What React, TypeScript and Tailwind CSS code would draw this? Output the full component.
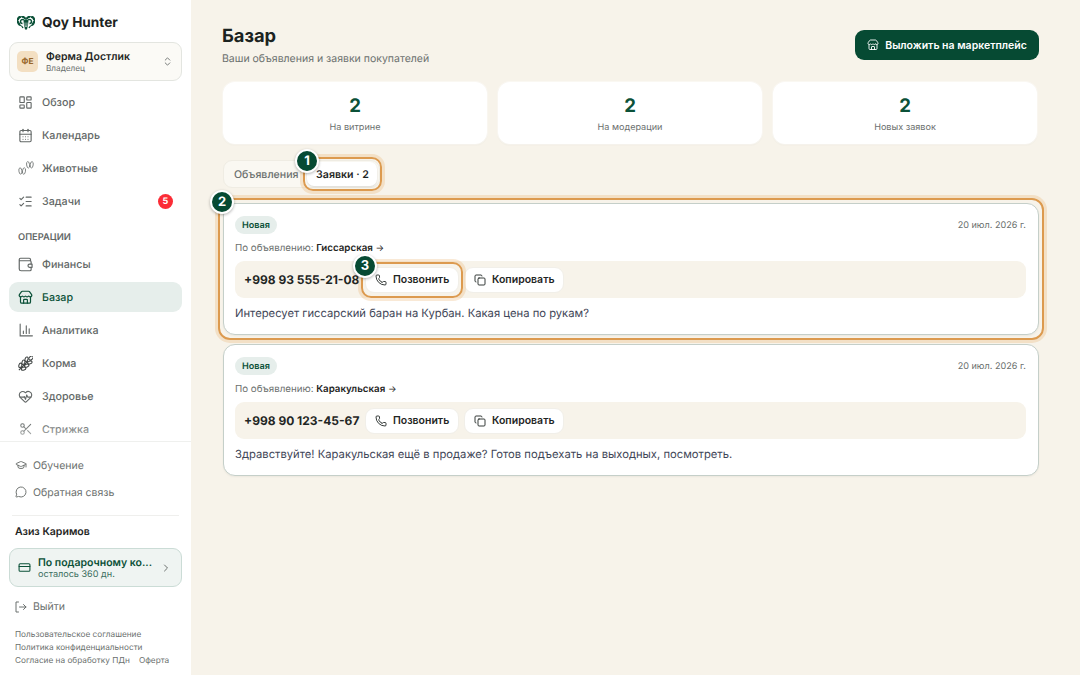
import type { ReactNode } from 'react';
import clsx from 'clsx';
import {
  CalendarDays,
  ChevronRight,
  ChevronsUpDown,
  Copy,
  CreditCard,
  GraduationCap,
  HeartPulse,
  LayoutDashboard,
  ListChecks,
  MessageCircle,
  Phone,
  Scissors,
  Store,
} from 'lucide-react';

function RamLogo() {
  return (
    <svg width="18" height="14" viewBox="0 0 36 28" fill="none" stroke="#0b5138" aria-hidden="true">
      <path d="M17 6C14 1 8 0 4 3c-4 4-3 11 2 15" strokeWidth="4.500" />
      <path d="M19 6c3-5 9-6 13-3 4 4 3 11-2 15" strokeWidth="4.500" />
      <path d="M14 8c-3-2-7-1-7 3 0 2 1 4 4 4" strokeWidth="3" />
      <path d="M22 8c3-2 7-1 7 3 0 2-1 4-4 4" strokeWidth="3" />
      <path d="M5 18c3 1 6 2 7 6M31 18c-3 1-6 2-7 6" strokeWidth="2.500" />
      <path d="M13 9l5-3 5 3-1 9-2 9h-4l-2-9z" fill="#0b5138" stroke="none" />
      <path d="M16 13v5l1 4M20 13v5l-1 4M8 1l2 4M28 1l-2 4M2 9l4 1M34 9l-4 1" stroke="#fff" strokeWidth="1.300" />
    </svg>
  );
}

function HoofIcon() {
  return (
    <svg width="16" height="16" viewBox="0 0 16 16" fill="none" stroke="currentColor" strokeWidth="0.75" className="shrink-0" aria-hidden="true">
      <ellipse cx="2.400" cy="11" rx="1.500" ry="3.200" transform="rotate(-8 2.400 11)" />
      <ellipse cx="6" cy="11" rx="1.500" ry="3.200" transform="rotate(8 6 11)" />
      <ellipse cx="10.100" cy="4.800" rx="1.500" ry="3.200" transform="rotate(-8 10.100 4.800)" />
      <ellipse cx="13.700" cy="4.800" rx="1.500" ry="3.200" transform="rotate(8 13.700 4.800)" />
    </svg>
  );
}

function WalletIcon() {
  return (
    <svg width="15" height="15" viewBox="0 0 24 24" fill="none" stroke="currentColor" strokeWidth="1.9" strokeLinecap="round" strokeLinejoin="round" aria-hidden="true">
      <path d="M20 6V4a2 2 0 0 0-2-2H4a2 2 0 0 0-2 2v15a3 3 0 0 0 3 3h14a2 2 0 0 0 2-2V8a2 2 0 0 0-2-2H2" />
      <path d="M22.500 11.500h-4a2.500 2.500 0 0 0 0 5h4z" fill="#fff" />
    </svg>
  );
}

function BarsIcon() {
  return (
    <svg width="14" height="14" viewBox="0 0 24 24" fill="none" stroke="currentColor" strokeWidth="1.900" strokeLinecap="round" aria-hidden="true">
      <path d="M2 2v20h21M7.500 18v-4M12.500 18V5M17.500 18v-8" />
    </svg>
  );
}

// ear of wheat: grains in pairs along a diagonal stem
function WheatIcon() {
  return (
    <svg width="15" height="15" viewBox="0 0 24 24" fill="none" stroke="#3f4443" strokeWidth="1.700" aria-hidden="true">
      <g transform="rotate(45 12 12)">
        <path d="M12 27V6" />
        <ellipse cx="12" cy="-.5" rx="2.600" ry="4" />
        <ellipse cx="8.300" cy="6" rx="2.300" ry="3.700" transform="rotate(-25 8.300 6)" />
        <ellipse cx="15.700" cy="6" rx="2.300" ry="3.700" transform="rotate(25 15.700 6)" />
        <ellipse cx="8.300" cy="13" rx="2.300" ry="3.700" transform="rotate(-25 8.300 13)" />
        <ellipse cx="15.700" cy="13" rx="2.300" ry="3.700" transform="rotate(25 15.700 13)" />
        <ellipse cx="8.300" cy="20" rx="2.300" ry="3.700" transform="rotate(-25 8.300 20)" />
        <ellipse cx="15.700" cy="20" rx="2.300" ry="3.700" transform="rotate(25 15.700 20)" />
      </g>
    </svg>
  );
}

function ExitIcon() {
  return (
    <svg width="12" height="12" viewBox="0 0 24 24" fill="none" stroke="currentColor" strokeWidth="2" strokeLinecap="round" strokeLinejoin="round" aria-hidden="true">
      <path d="M7 2H2v20h5M9 12h13M17 7l5 5-5 5" />
    </svg>
  );
}

interface NavItemProps {
  icon: ReactNode;
  label: string;
  active?: boolean;
  badge?: number;
}

function NavItem({ icon, label, active, badge }: NavItemProps) {
  return (
    <a
      className={clsx(
        'flex h-[30px] shrink-0 items-center rounded-[9px] pr-[9px] pl-[9px] text-[10.700px] font-medium',
        active ? 'bg-[#e6eeeb] text-[#0b5138]' : 'text-[#626766]',
      )}
    >
      <span className="flex w-[15px] justify-center">{icon}</span>
      <span className="ml-[9px] pt-[2px] leading-[16px]">{label}</span>
      {badge && (
        <span className="ml-auto flex size-[15px] items-center justify-center rounded-full bg-[#fb2c36] pt-px text-[9px] font-bold text-white">
          {badge}
        </span>
      )}
    </a>
  );
}

function Sidebar() {
  return (
    <aside className="flex h-full w-[191px] shrink-0 flex-col bg-white">
      <div className="flex h-[42px] items-center gap-[7px] pt-[3px] pl-[17px]">
        <RamLogo />
        <span className="pt-px text-[13.650px] font-bold text-[#1c2321]">Qoy Hunter</span>
      </div>
      <div className="mr-[9px] ml-[9px] flex h-[39px] shrink-0 items-center rounded-[9px] border border-[#e3e5e0] bg-[#fbfaf6] pr-[8px] pl-[7px]">
        <span className="flex size-[21px] items-center justify-center rounded-[5px] bg-[#f3dfc2] pt-px text-[8.300px] font-bold text-[#98662a]">ФЕ</span>
        <span className="ml-[8px] flex flex-col pt-px">
          <span className="text-[10.500px] leading-[13px] font-semibold text-[#1f2624]">Ферма Достлик</span>
          <span className="text-[8.200px] leading-[11px] text-[#6b706e]">Владелец</span>
        </span>
        <ChevronsUpDown size={11} className="ml-auto text-[#6b706e]" />
      </div>

      <nav className="relative flex h-[361px] shrink-0 flex-col gap-[3px] overflow-hidden border-b border-[#eff0ee] px-[9px] pt-[6px]">
        <NavItem icon={<LayoutDashboard size={15} strokeWidth={1.8} />} label="Обзор" />
        <NavItem icon={<CalendarDays size={15} strokeWidth={1.8} />} label="Календарь" />
        <NavItem icon={<HoofIcon />} label="Животные" />
        <NavItem icon={<ListChecks size={15} strokeWidth={1.8} />} label="Задачи" badge={5} />
        <h2 className="flex h-[27px] shrink-0 items-end pb-px pl-[9px] text-[9.300px] leading-[14px] font-semibold text-[#626766]">ОПЕРАЦИИ</h2>
        <NavItem icon={<WalletIcon />} label="Финансы" />
        <NavItem icon={<Store size={15} strokeWidth={1.9} />} label="Базар" active />
        <NavItem icon={<BarsIcon />} label="Аналитика" />
        <NavItem icon={<WheatIcon />} label="Корма" />
        <NavItem icon={<HeartPulse size={15} strokeWidth={1.8} />} label="Здоровье" />
        <NavItem icon={<Scissors size={14} strokeWidth={1.8} />} label="Стрижка" />
        <div className="absolute inset-x-0 bottom-0 h-[20px] bg-linear-to-t from-white/60 to-white/0" />
      </nav>

      <div className="flex flex-col px-[15px] pt-[9px] text-[10.500px] text-[#6b706e]">
        <a className="flex h-[27px] items-center gap-[6px] pt-px">
          <GraduationCap size={12} strokeWidth={1.9} />
          <span className="pt-px">Обучение</span>
        </a>
        <a className="flex h-[27px] items-center gap-[6px] pt-px">
          <MessageCircle size={12} strokeWidth={1.9} />
          <span className="pt-px">Обратная связь</span>
        </a>
      </div>
      <div className="mx-[12px] mt-[10px] border-t border-[#efefed]" />
      <p className="mt-[8px] pl-[15px] text-[10.550px] leading-[16px] font-semibold text-[#1f2624]">Азиз Каримов</p>
      <a className="mx-[9px] mt-[8px] flex h-[39px] shrink-0 items-center rounded-[9px] border border-[#cbdcd6] bg-[#eff4f2] pr-[9px] pl-[8px]">
        <CreditCard size={13} strokeWidth={2} className="shrink-0 text-[#0b5138]" />
        <span className="ml-[7px] flex flex-col">
          <span className="text-[10.500px] leading-[13px] font-semibold whitespace-nowrap text-[#0b5138]">По подарочному ко...</span>
          <span className="text-[9.100px] leading-[11px] text-[#3c6f5f]">осталось 360 дн.</span>
        </span>
        <ChevronRight size={12} className="ml-auto shrink-0 text-[#6b706e]" />
      </a>
      <a className="mt-[6px] flex h-[27px] items-center gap-[6px] pl-[15px] text-[10.500px] text-[#6b706e]">
        <ExitIcon />
        <span className="pt-px">Выйти</span>
      </a>
      <div className="mt-[8px] flex flex-wrap gap-x-[9px] pl-[15px] text-[8.240px] leading-[13px] text-[#6b706e]">
        <a className="w-full">Пользовательское соглашение</a>
        <a className="w-full">Политика конфиденциальности</a>
        <a>Согласие на обработку ПДн</a>
        <a>Оферта</a>
      </div>
    </aside>
  );
}

function Stat({ value, label }: { value: number; label: string }) {
  return (
    <div className="flex h-[62px] flex-1 flex-col items-center rounded-[12px] bg-white pt-[12px] shadow-[0_0_0_1px_rgba(255,255,255,0.4),0_1px_2px_rgba(60,50,20,0.06)]">
      <span className="text-[18.600px] leading-[25px] font-bold text-[#0b5138]">{value}</span>
      <span className="mt-[2px] text-[9.100px] leading-[14px] text-[#6b706e]">{label}</span>
    </div>
  );
}

// numbered tour marker, centred on the top-left corner of its ring
function Marker({ n }: { n: number }) {
  return (
    <span className="absolute -top-[10px] -left-[10px] flex size-[24px] items-center justify-center rounded-full border-2 border-white bg-[#064a33] pt-px text-[13px] font-bold text-white shadow-[0_1px_3px_rgba(0,0,0,0.3)]">
      {n}
    </span>
  );
}

const RING = 'pointer-events-none absolute z-10 border-2 border-[#dc9a4f] shadow-[0_0_0_3px_rgba(232,168,92,0.25)]';

interface LeadProps {
  listing: string;
  phone: string;
  message: string;
  highlighted?: boolean;
}

function Lead({ listing, phone, message, highlighted }: LeadProps) {
  return (
    <article className="relative flex h-[132px] flex-col rounded-[12px] border border-[#c5cfc9] bg-white pr-[12px] pl-[11px] pt-[12px] shadow-[0_1px_2px_rgba(0,0,0,0.05)]">
      {highlighted && (
        <div className={clsx(RING, '-inset-x-[6px] -top-[6px] -bottom-[6px] rounded-[12px]')}>
          <Marker n={2} />
        </div>
      )}
      <div className="flex h-[18px] items-center justify-between">
        <span className="flex h-[18px] items-center rounded-full bg-[#e6eeeb] px-[7px] pt-px text-[9.100px] font-semibold text-[#0b5138]">Новая</span>
        <span className="pt-px text-[9.100px] text-[#6b706e]">20 июл. 2026 г.</span>
      </div>
      <p className="mt-[6px] h-[16px] text-[9.750px] leading-[17px] text-[#6b706e]">
        По объявлению: <span className="font-semibold text-[#1f2624]">{listing}</span>{' '}
        <span className="text-[9px] text-[#1f2624]">→</span>
      </p>
      <div className="mt-[5px] flex h-[37px] shrink-0 items-center rounded-[9px] bg-[#f7f3ea] pl-[9px]">
        <span className="w-[121px] pt-px text-[12px] font-bold whitespace-nowrap text-[#1f2624]">{phone}</span>
        <button className="relative flex h-[26px] w-[94px] items-center rounded-[9px] border border-[#f1efe9] bg-white pl-[9px] text-[10.500px] font-semibold text-[#1f2624]">
          <Phone size={12} strokeWidth={1.8} className="mr-[6px]" />
          <span className="pt-px">Позвонить</span>
          {highlighted && (
            <span className={clsx(RING, '-inset-x-[5px] -inset-y-[6px] rounded-[10px]')}>
              <Marker n={3} />
            </span>
          )}
        </button>
        <button className="ml-[5px] flex h-[26px] w-[100px] items-center rounded-[9px] border border-[#f1efe9] bg-white pl-[9px] text-[10.500px] font-semibold text-[#1f2624]">
          <Copy size={12} strokeWidth={1.8} className="mr-[6px]" />
          <span className="pt-px">Копировать</span>
        </button>
      </div>
      <p className="mt-[6px] text-[11.240px] leading-[19px] text-[#3f4657]">{message}</p>
    </article>
  );
}

export default function App() {
  return (
    <div className="flex h-[675px] w-[1080px] overflow-hidden bg-[#f7f3ea] font-['Inter',sans-serif] [text-rendering:geometricPrecision]">
      <Sidebar />
      <main className="flex w-[848px] flex-col pt-[24px] pl-[31px]">
        <header className="flex h-[58px] items-start justify-between">
          <div>
            <h1 className="text-[18.300px] leading-[24px] font-bold text-[#1c2321]">Базар</h1>
            <p className="mt-[2px] text-[10.500px] leading-[18px] text-[#6b706e]">Ваши объявления и заявки покупателей</p>
          </div>
          <button className="mt-[6px] flex h-[30px] w-[184px] items-center justify-center gap-[6px] rounded-[9px] bg-[#064a33] text-[10.500px] font-semibold whitespace-nowrap text-white">
            <Store size={12} strokeWidth={1.8} />
            <span className="pt-px">Выложить на маркетплейс</span>
          </button>
        </header>

        <section className="flex gap-[11px] pr-[2px] pl-[1px]">
          <Stat value={2} label="На витрине" />
          <Stat value={2} label="На модерации" />
          <Stat value={2} label="Новых заявок" />
        </section>

        <div className="mt-[16px] ml-[1px] flex h-[28px] w-[157px] items-center rounded-[9px] border border-[#efece3] bg-[#faf8f2] text-[10.600px] font-medium">
          <span className="w-[83px] pt-px pl-[10px] text-[#6b706e]">Объявления</span>
          <span className="relative flex h-[24px] w-[70px] items-center justify-center rounded-[7px] bg-white pt-px pl-px font-semibold whitespace-nowrap text-[#1f2624] shadow-[0_1px_2px_rgba(0,0,0,0.12)]">
            Заявки · 2
            <span className={clsx(RING, '-right-[5px] -left-[4px] -inset-y-[5px] rounded-[10px]')}>
              <Marker n={1} />
            </span>
          </span>
        </div>

        <section className="mt-[15px] ml-[1px] flex flex-col gap-[9px]">
          <Lead listing="Гиссарская" phone="+998 93 555-21-08" message="Интересует гиссарский баран на Курбан. Какая цена по рукам?" highlighted />
          <Lead listing="Каракульская" phone="+998 90 123-45-67" message="Здравствуйте! Каракульская ещё в продаже? Готов подъехать на выходных, посмотреть." />
        </section>
      </main>
    </div>
  );
}
